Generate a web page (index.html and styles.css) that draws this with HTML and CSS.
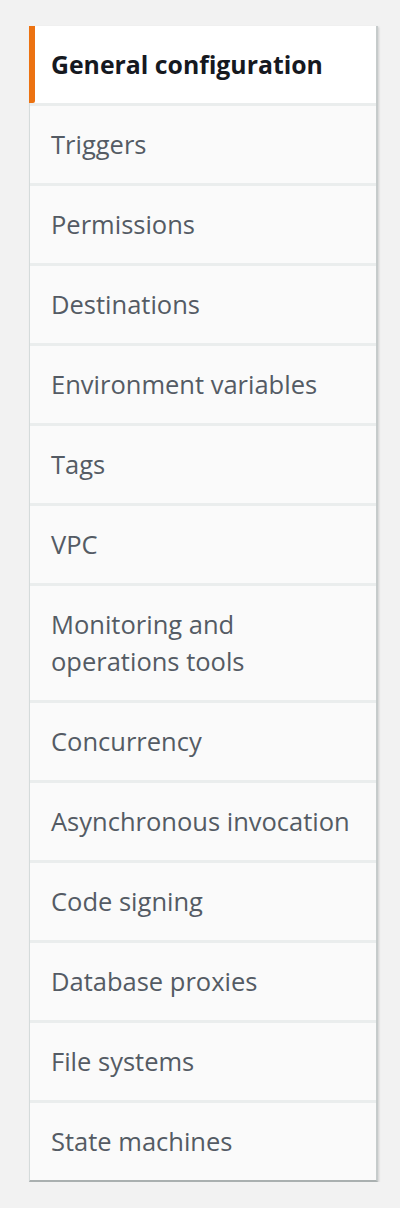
FILE: index.html
```html
<!DOCTYPE html>
<html>
<head>
<meta charset="utf-8">
<link rel="stylesheet" href="styles.css">
</head>
<body>
<nav class="panel">
  <ul class="tabs">
    <li class="tab active">General configuration</li>
    <li class="tab">Triggers</li>
    <li class="tab">Permissions</li>
    <li class="tab">Destinations</li>
    <li class="tab">Environment variables</li>
    <li class="tab">Tags</li>
    <li class="tab">VPC</li>
    <li class="tab">Monitoring and<br>operations tools</li>
    <li class="tab">Concurrency</li>
    <li class="tab">Asynchronous invocation</li>
    <li class="tab">Code signing</li>
    <li class="tab">Database proxies</li>
    <li class="tab">File systems</li>
    <li class="tab">State machines</li>
  </ul>
</nav>
</body>
</html>
```
FILE: styles.css
```css
html, body {
  margin: 0;
  padding: 0;
  background: #f2f2f2;
}
body {
  padding: 26px 0 0 29px;
  font-family: "Open Sans", "Noto Sans", sans-serif;
}
.panel {
  width: 346px;
  background: #fafafa;
  border-left: 1px solid #d5dbdb;
  border-right: 2px solid #c6cbcb;
  border-bottom: 2px solid #aab0b0;
  box-shadow: 1px 1px 2px rgba(0,0,0,0.15);
}
.tabs {
  list-style: none;
  margin: 0;
  padding: 0;
}
.tab {
  position: relative;
  padding: 20px 4px 20px 21px;
  line-height: 37px;
  font-size: 25.5px;
  color: #545b64;
  border-bottom: 3px solid #eaeded;
  white-space: nowrap;
}
.tab:last-child {
  border-bottom: none;
}
.tab.active {
  background: #ffffff;
  color: #16191f;
  font-weight: 700;
  font-size: 24.8px;
}
.tab.active::before {
  content: "";
  position: absolute;
  left: -1px;
  top: 0;
  bottom: 0;
  width: 6px;
  background: #ec7211;
  border-radius: 0 0 2px 0;
}
```
